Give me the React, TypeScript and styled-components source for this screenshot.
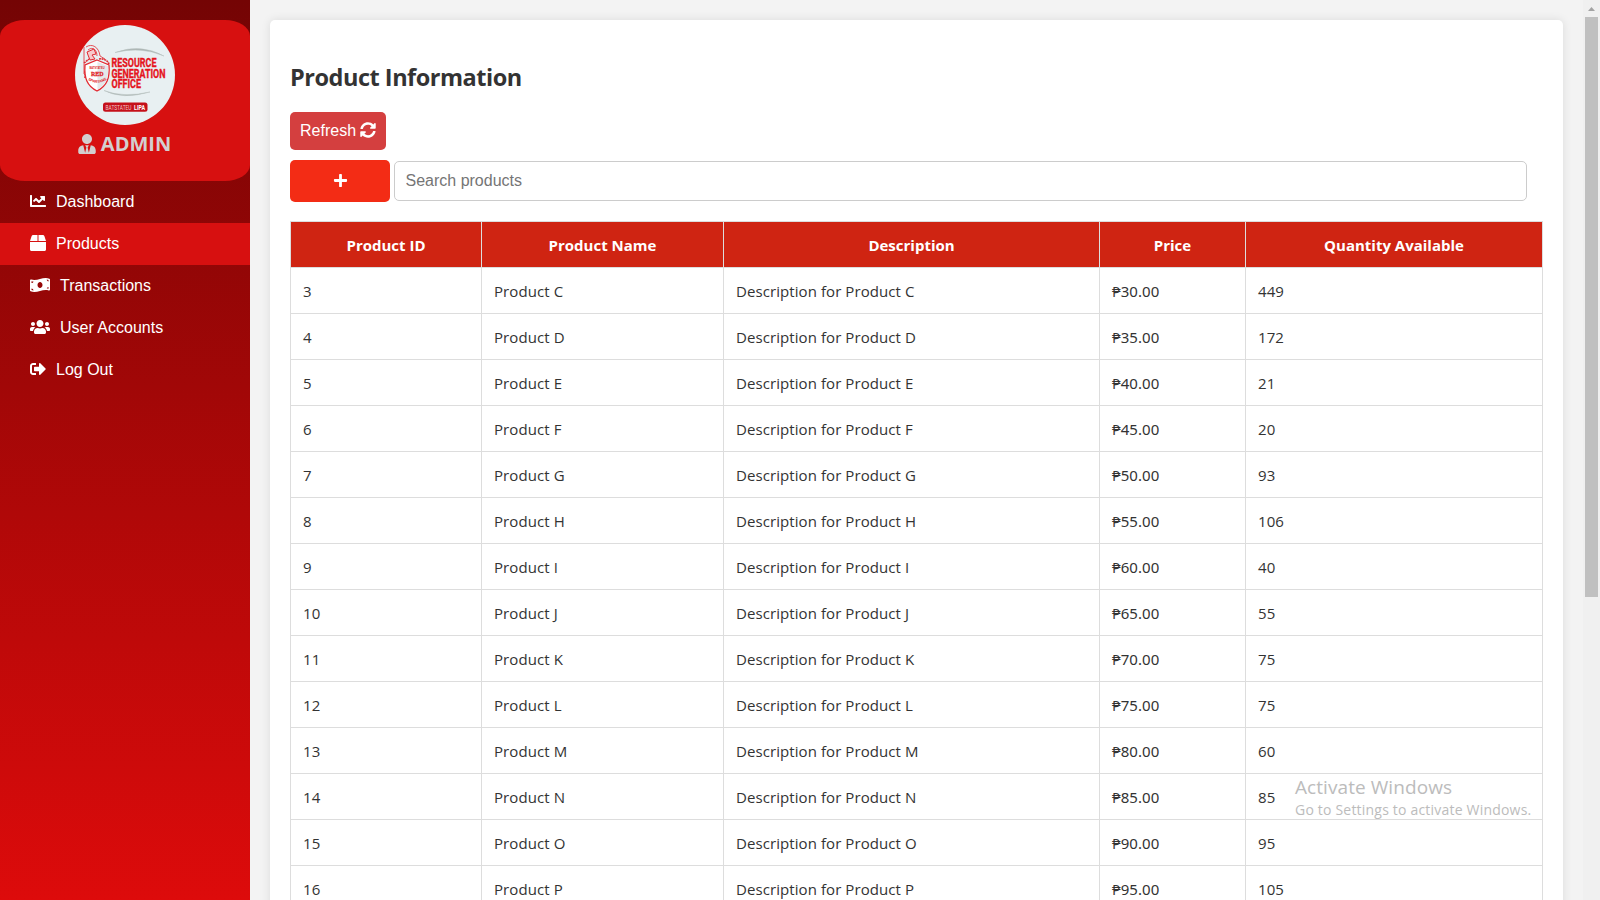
import React from "react";
import styled, { createGlobalStyle } from "styled-components";
import { FaChartLine, FaBox, FaMoneyBillWave, FaUsers, FaSignOutAlt, FaSyncAlt, FaPlus, FaUserTie } from "react-icons/fa";

const GlobalStyle = createGlobalStyle`
  * { box-sizing: border-box; }
  body { margin: 0; background: #f3f3f3; overflow: hidden; }
`;

const ui = `"Segoe UI", "Open Sans", "Noto Sans", sans-serif`;
const arial = `"Liberation Sans", Arial, sans-serif`;

const Page = styled.div`
  display: flex;
  height: 900px;
  width: 1600px;
  overflow: hidden;
  font-family: ${ui};
  color: #333;
`;

const Sidebar = styled.nav`
  width: 250px;
  flex: none;
  padding-top: 20px;
  background: linear-gradient(to bottom, #740404, #dd0b0b);
`;

const Profile = styled.div`
  height: 161px;
  padding-top: 5px;
  border-radius: 10%;
  background: #d71010;
  display: flex;
  flex-direction: column;
  align-items: center;
`;

const Logo = styled.svg`
  width: 100px;
  height: 100px;
  display: block;
`;

const Role = styled.div`
  display: flex;
  align-items: center;
  gap: 4px;
  height: 27px;
  margin: 5px 2px 0 0;
  color: #d3cfcf;
  font-size: 20px;
  font-weight: 700;
  line-height: 27px;
`;

const MenuItem = styled.a<{ $active?: boolean; $wide?: boolean }>`
  display: flex;
  align-items: center;
  gap: 10px;
  height: 42px;
  padding: 0 0 1px 30px;
  color: #fff;
  background: ${(p) => (p.$active ? "#d71010" : "transparent")};
  font-family: ${arial};
  font-size: 16px;
  svg {
    height: 16px;
    width: ${(p) => (p.$wide ? 20 : 16)}px;
    margin-bottom: 1px;
  }
`;

const Main = styled.main`
  flex: 1;
  padding: 20px 20px 0;
`;

const Card = styled.section`
  height: 1500px;
  padding: 40px 20px;
  border-radius: 5px;
  background: #fff;
  box-shadow: 0 0 10px rgba(0, 0, 0, 0.1);
`;

const Title = styled.h2`
  margin: -1px 0 1px;
  height: 52px;
  font-size: 23.5px;
  line-height: 36px;
  font-weight: 700;
  letter-spacing: -0.48px;
`;

const RefreshButton = styled.button`
  display: flex;
  align-items: center;
  gap: 4px;
  width: 96px;
  height: 38px;
  padding: 0 10px 1px;
  border: 0;
  border-radius: 5px;
  background: #d43f3f;
  color: #fff;
  font: 16px ${arial};
  svg { margin-bottom: 1px; }
`;

const Tools = styled.div`
  display: flex;
  align-items: center;
  gap: 4px;
  margin: 10px 0 19px;
`;

const AddButton = styled.button`
  display: flex;
  align-items: center;
  justify-content: center;
  width: 100px;
  height: 42px;
  padding-bottom: 2px;
  border: 0;
  border-radius: 5px;
  background: #f32c15;
  color: #fff;
  font-size: 15px;
`;

const Search = styled.input`
  width: 1133px;
  height: 40px;
  padding: 0 10.5px 1px;
  border: 1px solid #ccc;
  border-radius: 5px;
  font: 16px ${arial};
  &::placeholder { color: #757575; }
`;

const Table = styled.table`
  width: 1253px;
  table-layout: fixed;
  border-collapse: collapse;
`;

const Th = styled.th`
  height: 46px;
  padding: 0;
  border: 1px solid #ddd;
  background: #cf2412;
  color: #fff;
  font-size: 15px;
  font-weight: 700;
  line-height: 20px;
`;

const Td = styled.td<{ $currency?: boolean }>`
  height: 46px;
  padding: 0 12px;
  border: 1px solid #ddd;
  font-family: ${(p) => (p.$currency ? `"Noto Sans", sans-serif` : "inherit")};
  font-size: 15px;
  line-height: 20px;
  letter-spacing: 0.08px;
`;

const Scrollbar = styled.div`
  width: 17px;
  flex: none;
  padding: 0 2px;
  background: #f0f0f0;
  display: flex;
  flex-direction: column;
`;

const ScrollArrow = styled.svg`
  width: 13px;
  height: 17px;
  flex: none;
`;

const Thumb = styled.div`
  height: 580px;
  background: #c0c0c0;
`;

const Watermark = styled.div`
  position: absolute;
  left: 1295px;
  top: 774px;
  color: #bcbcbc;
  white-space: nowrap;
  line-height: 26px;
`;

const WatermarkTitle = styled.div`
  font-size: 19px;
  letter-spacing: 0.07px;
`;

const WatermarkText = styled.div`
  font-size: 14px;
  line-height: 19px;
  letter-spacing: 0.2px;
`;

const columns = [
  { label: "Product ID", width: 191 },
  { label: "Product Name", width: 242 },
  { label: "Description", width: 376 },
  { label: "Price", width: 146 },
  { label: "Quantity Available", width: 297 },
];

const quantities = [449, 172, 21, 20, 93, 106, 40, 55, 75, 75, 60, 85, 95, 105];

const products = quantities.map((quantity, i) => ({
  id: i + 3,
  letter: String.fromCharCode(67 + i),
  price: `₱${30 + i * 5}.00`,
  quantity,
}));

const menu = [
  { label: "Dashboard", Icon: FaChartLine },
  { label: "Products", Icon: FaBox, active: true },
  { label: "Transactions", Icon: FaMoneyBillWave, wide: true },
  { label: "User Accounts", Icon: FaUsers, wide: true },
  { label: "Log Out", Icon: FaSignOutAlt },
];

function OfficeLogo() {
  return (
    <Logo viewBox="0 0 100 100">
      <circle cx="50" cy="50" r="50" fill="#e8f0f2" />
      <path d="M40 27.5 Q66 18 89 31 Q66 21 40 27.5Z" fill="#a9b3b2" stroke="#b9c2c1" strokeWidth=".5" />
      <path d="M29 65.5 Q47 75 75 67 Q48 73 29 65.5Z" fill="#a9b3b2" stroke="#b9c2c1" strokeWidth=".5" />
      <g fill="none" stroke="#e22a32" strokeWidth="1">
        <path d="M9 22 V49 M11 22 C17 18 24 22 25 31 L30 34 M13 25 C18 21 22 25 22 31" strokeWidth=".8" />
        <path d="M12 27 L19 24 L21 29 L17 30 L20 34 L15 35 L13 30Z" fill="#f7c9cb" />
        <path d="M9 38 L14 34 M24 34 C29 33 33 36 34 39 M10 46 V53" strokeWidth="1.6" strokeDasharray="2 .6" />
        <path d="M22 35 L34 40 C35 53 32 61 22 66 C12 61 9 53 10 40Z" fill="#fff" strokeWidth="1.3" />
        <path d="M22.5 37 L33 41 C34 53 31 60 22.5 64.5Z" fill="#e3e8ea" stroke="none" />
      </g>
      <g fill="#df1f28" fontFamily="Liberation Sans, sans-serif" fontWeight="700" textAnchor="middle">
        <text x="22" y="44.3" fontSize="3" textLength="15" lengthAdjust="spacingAndGlyphs">BATSTATEU</text>
        <text x="22.3" y="51.2" fontSize="7" textLength="12.5" lengthAdjust="spacingAndGlyphs" fontFamily="Liberation Serif, serif" stroke="#df1f28" strokeWidth=".3">RED</text>
        <path id="shieldArc" d="M10 52 Q22 64 35 52" fill="none" />
        <text fontSize="3.8"><textPath href="#shieldArc" startOffset="50%">SPARTANS</textPath></text>
      </g>
      <g fill="#e5141d" stroke="#e5141d" strokeWidth=".35" fontFamily="Roboto, Liberation Sans, sans-serif" fontWeight="700" fontSize="12">
        <text x="36.5" y="42.2" textLength="45" lengthAdjust="spacingAndGlyphs">RESOURCE</text>
        <text x="36.5" y="52.8" textLength="54" lengthAdjust="spacingAndGlyphs">GENERATION</text>
        <text x="36.5" y="63.2" textLength="29.5" lengthAdjust="spacingAndGlyphs">OFFICE</text>
      </g>
      <rect x="28" y="77.5" width="44.5" height="9.3" rx="2.5" fill="#c5101a" />
      <g fill="#fff" fontFamily="Roboto, Liberation Sans, sans-serif" fontSize="7.4">
        <text x="30.5" y="84.8" textLength="26" lengthAdjust="spacingAndGlyphs" fill="#f3c6c8">BATSTATEU</text>
        <text x="59" y="84.8" textLength="11" lengthAdjust="spacingAndGlyphs" fontWeight="700">LIPA</text>
      </g>
    </Logo>
  );
}

export default function App() {
  return (
    <Page>
      <GlobalStyle />
      <Sidebar>
        <Profile>
          <OfficeLogo />
          <Role>
            <FaUserTie />
            <span>ADMIN</span>
          </Role>
        </Profile>
        {menu.map(({ label, Icon, active, wide }) => (
          <MenuItem key={label} $active={active} $wide={wide}>
            <Icon />
            {label}
          </MenuItem>
        ))}
      </Sidebar>
      <Main>
        <Card>
          <Title>Product Information</Title>
          <RefreshButton>
            Refresh <FaSyncAlt />
          </RefreshButton>
          <Tools>
            <AddButton>
              <FaPlus />
            </AddButton>
            <Search placeholder="Search products" />
          </Tools>
          <Table>
            <colgroup>
              {columns.map((c) => (
                <col key={c.label} width={c.width} />
              ))}
            </colgroup>
            <thead>
              <tr>
                {columns.map((c) => (
                  <Th key={c.label}>{c.label}</Th>
                ))}
              </tr>
            </thead>
            <tbody>
              {products.map((p) => (
                <tr key={p.id}>
                  <Td>{p.id}</Td>
                  <Td>Product {p.letter}</Td>
                  <Td>Description for Product {p.letter}</Td>
                  <Td $currency>{p.price}</Td>
                  <Td>{p.quantity}</Td>
                </tr>
              ))}
            </tbody>
          </Table>
        </Card>
      </Main>
      <Scrollbar>
        <ScrollArrow viewBox="0 0 13 17">
          <path d="M3 11 L6.5 7 L10 11Z" fill="#a3a3a3" />
        </ScrollArrow>
        <Thumb />
      </Scrollbar>
      <Watermark>
        <WatermarkTitle>Activate Windows</WatermarkTitle>
        <WatermarkText>Go to Settings to activate Windows.</WatermarkText>
      </Watermark>
    </Page>
  );
}
